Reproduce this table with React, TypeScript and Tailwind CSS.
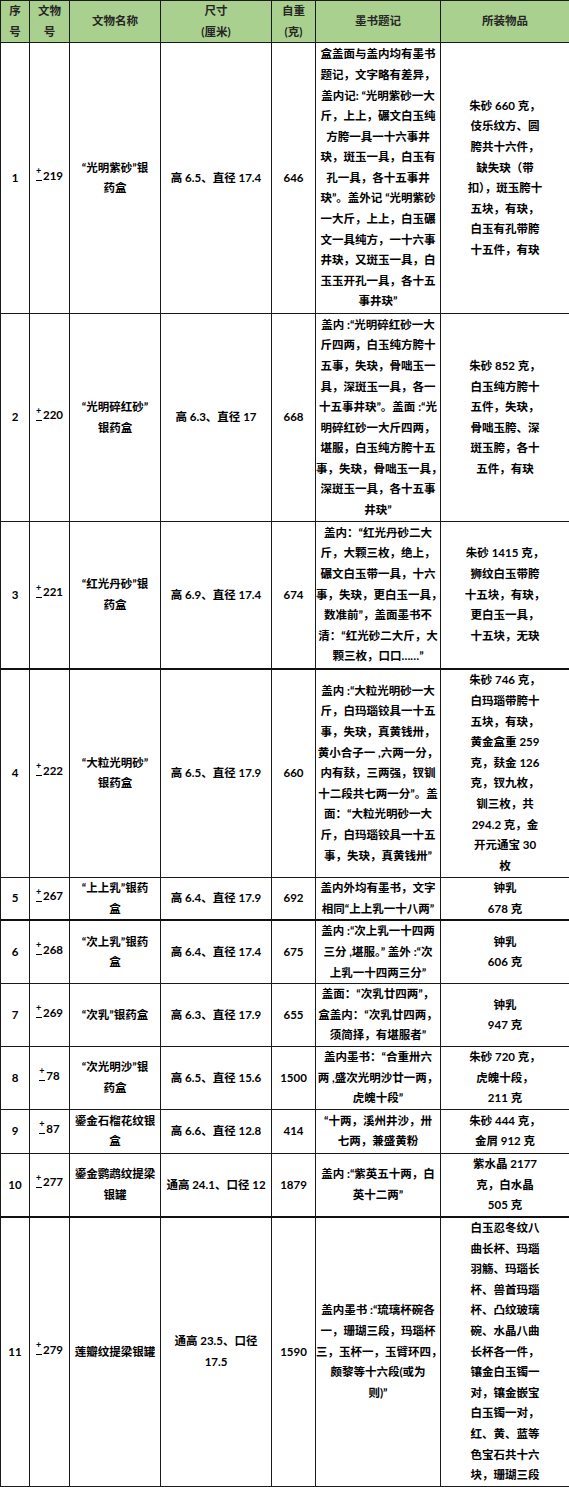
import React from 'react';

type Row = {
  no: string;
  code: string;
  name: string[];
  size: string[];
  weight: string;
  ink: string[];
  items: string[];
  h: string;
  thick?: boolean;
};

const ROWS: Row[] = [
  {
    no: '1',
    code: '219',
    name: ['“光明紫砂”银', '药盒'],
    size: ['高 6.5、直径 17.4'],
    weight: '646',
    ink: [
      '盒盖面与盖内均有墨书',
      '题记，文字略有差异，',
      '盖内记: “光明紫砂一大',
      '斤，上上，碾文白玉纯',
      '方胯一具一十六事井',
      '玦，斑玉一具，白玉有',
      '孔一具，各十五事井',
      '玦”。盖外记 “光明紫砂',
      '一大斤，上上，白玉碾',
      '文一具纯方，一十六事',
      '井玦，又斑玉一具，白',
      '玉玉开孔一具，各十五',
      '事井玦”',
    ],
    items: ['朱砂 660 克，', '伎乐纹方、圆', '胯共十六件，', '缺失玦（带', '扣），斑玉胯十', '五块，有玦，', '白玉有孔带胯', '十五件，有玦'],
    h: 'h-[271px]',
  },
  {
    no: '2',
    code: '220',
    name: ['“光明碎红砂”', '银药盒'],
    size: ['高 6.3、直径 17'],
    weight: '668',
    ink: [
      '盖内 :“光明碎红砂一大',
      '斤四两，白玉纯方胯十',
      '五事，失玦，骨咄玉一',
      '具，深斑玉一具，各一',
      '十五事井玦”。盖面 :“光',
      '明碎红砂一大斤四两，',
      '堪服，白玉纯方胯十五',
      '事，失玦，骨咄玉一具，',
      '深斑玉一具，各十五事',
      '井玦”',
    ],
    items: ['朱砂 852 克，', '白玉纯方胯十', '五件，失玦，', '骨咄玉胯、深', '斑玉胯，各十', '五件，有玦'],
    h: 'h-[208px]',
  },
  {
    no: '3',
    code: '221',
    name: ['“红光丹砂”银', '药盒'],
    size: ['高 6.9、直径 17.4'],
    weight: '674',
    ink: [
      '盖内：“红光丹砂二大',
      '斤，大颗三枚，绝上，',
      '碾文白玉带一具，十六',
      '事，失玦，更白玉一具，',
      '数准前”，盖面墨书不',
      '清：“红光砂二大斤，大',
      '颗三枚，口口……”',
    ],
    items: ['朱砂 1415 克，', '狮纹白玉带胯', '十五块，有玦，', '更白玉一具，', '十五块，无玦'],
    h: 'h-[147px]',
    thick: true,
  },
  {
    no: '4',
    code: '222',
    name: ['“大粒光明砂”', '银药盒'],
    size: ['高 6.5、直径 17.9'],
    weight: '660',
    ink: [
      '盖内 :“大粒光明砂一大',
      '斤，白玛瑙铰具一十五',
      '事，失玦，真黄钱卅，',
      '黄小合子一 ,六两一分，',
      '内有麸，三两强，钗钏',
      '十二段共七两一分”。盖',
      '面：“大粒光明砂一大',
      '斤，白玛瑙铰具一十五',
      '事，失玦，真黄钱卅”',
    ],
    items: ['朱砂 746 克，', '白玛瑙带胯十', '五块，有玦，', '黄金盒重 259', '克，麸金 126', '克，钗九枚，', '钏三枚，共', '294.2 克，金', '开元通宝 30', '枚'],
    h: 'h-[209px]',
  },
  {
    no: '5',
    code: '267',
    name: ['“上上乳”银药', '盒'],
    size: ['高 6.4、直径 17.9'],
    weight: '692',
    ink: ['盖内外均有墨书，文字', '相同“上上乳一十八两”'],
    items: ['钟乳', '678 克'],
    h: 'h-[42px]',
    thick: true,
  },
  {
    no: '6',
    code: '268',
    name: ['“次上乳”银药', '盒'],
    size: ['高 6.4、直径 17.4'],
    weight: '675',
    ink: ['盖内 :“次上乳一十四两', '三分 ,堪服。” 盖外 :“次', '上乳一十四两三分”'],
    items: ['钟乳', '606 克'],
    h: 'h-[63px]',
  },
  {
    no: '7',
    code: '269',
    name: ['“次乳”银药盒'],
    size: ['高 6.3、直径 17.9'],
    weight: '655',
    ink: ['盖面：“次乳廿四两”，', '盒盖内：“次乳廿四两，', '须简择，有堪服者”'],
    items: ['钟乳', '947 克'],
    h: 'h-[63px]',
  },
  {
    no: '8',
    code: '78',
    name: ['“次光明沙”银', '药盒'],
    size: ['高 6.5、直径 15.6'],
    weight: '1500',
    ink: ['盖内墨书：“合重卅六', '两 ,盛次光明沙廿一两，', '虎魄十段”'],
    items: ['朱砂 720 克，', '虎魄十段，', '211 克'],
    h: 'h-[62px]',
  },
  {
    no: '9',
    code: '87',
    name: ['鎏金石榴花纹银', '盒'],
    size: ['高 6.6、直径 12.8'],
    weight: '414',
    ink: ['“十两，溪州井沙，卅', '七两，兼盛黄粉'],
    items: ['朱砂 444 克，', '金屑 912 克'],
    h: 'h-[44px]',
  },
  {
    no: '10',
    code: '277',
    name: ['鎏金鹦鹉纹提梁', '银罐'],
    size: ['通高 24.1、口径 12'],
    weight: '1879',
    ink: ['盖内 :“紫英五十两，白', '英十二两”'],
    items: ['紫水晶 2177', '克，白水晶', '505 克'],
    h: 'h-[61px]',
    thick: true,
  },
  {
    no: '11',
    code: '279',
    name: ['莲瓣纹提梁银罐'],
    size: ['通高 23.5、口径', '17.5'],
    weight: '1590',
    ink: ['盖内墨书 :“琉璃杯碗各', '一，珊瑚三段，玛瑙杯', '三，玉杯一，玉臂环四，', '颇黎等十六段(或为', '则)”'],
    items: [
      '白玉忍冬纹八',
      '曲长杯、玛瑙',
      '羽觞、玛瑙长',
      '杯、兽首玛瑙',
      '杯、凸纹玻璃',
      '碗、水晶八曲',
      '长杯各一件，',
      '镶金白玉镯一',
      '对，镶金嵌宝',
      '白玉镯一对，',
      '红、黄、蓝等',
      '色宝石共十六',
      '块，珊瑚三段',
    ],
    h: 'h-[270px]',
  },
];

const Lines = ({ lines }: { lines: string[] }) => (
  <>
    {lines.map((l, i) => (
      <div key={i} className="whitespace-nowrap">
        {l}
      </div>
    ))}
  </>
);

// 文物号前的小“±”记号
const Code = ({ n }: { n: string }) => (
  <span className="inline-flex items-center">
    <span className="relative mr-[1px] inline-block h-[16px] w-[6px]">
      <span className="absolute left-0 top-[-2px] text-[9px] leading-[9px]">+</span>
      <span className="absolute left-0 top-[12px] h-[1px] w-[6px] bg-black"></span>
    </span>
    {n}
  </span>
);

export default function App() {
  const cell = 'border border-[#1a1a1a] p-0 text-center align-middle';
  const head = 'border border-[#1a1a1a] p-0 text-center align-middle font-bold text-[#262626]';

  return (
    <div className="w-[569px] bg-white">
      <table className="w-[569px] table-fixed border-collapse font-['Lato','Noto_Sans_CJK_SC',sans-serif] text-[11.5px] font-bold leading-[20.6px] text-black">
        <colgroup>
          <col className="w-[29px]" />
          <col className="w-[40px]" />
          <col className="w-[91px]" />
          <col className="w-[111px]" />
          <col className="w-[44px]" />
          <col className="w-[125px]" />
          <col className="w-[129px]" />
        </colgroup>
        <thead>
          <tr className="h-[42px] bg-[#a9d08e]">
            <th className={head}>
              <Lines lines={['序', '号']} />
            </th>
            <th className={head}>
              <Lines lines={['文物', '号']} />
            </th>
            <th className={head}>文物名称</th>
            <th className={head}>
              <Lines lines={['尺寸', '(厘米)']} />
            </th>
            <th className={head}>
              <Lines lines={['自重', '(克)']} />
            </th>
            <th className={head}>墨书题记</th>
            <th className={head}>所装物品</th>
          </tr>
        </thead>
        <tbody>
          {ROWS.map((r) => (
            <tr key={r.no} className={`${r.h} ${r.thick ? 'border-b-2 border-b-[#111]' : ''}`}>
              <td className={cell}>{r.no}</td>
              <td className={cell}>
                <Code n={r.code} />
              </td>
              <td className={cell}>
                <Lines lines={r.name} />
              </td>
              <td className={cell}>
                <Lines lines={r.size} />
              </td>
              <td className={cell}>{r.weight}</td>
              <td className={cell}>
                <Lines lines={r.ink} />
              </td>
              <td className={cell}>
                <Lines lines={r.items} />
              </td>
            </tr>
          ))}
        </tbody>
      </table>
    </div>
  );
}
